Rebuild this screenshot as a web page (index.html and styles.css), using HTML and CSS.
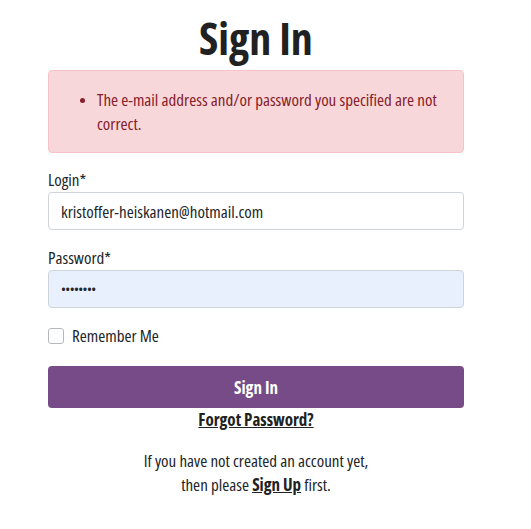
FILE: index.html
```html
<!DOCTYPE html>
<html lang="en">
<head>
<meta charset="utf-8">
<title>Sign In</title>
<link rel="stylesheet" href="styles.css">
</head>
<body>
<main class="page">
  <h1 class="title">Sign In</h1>
  <div class="alert">
    <ul class="alert-list">
      <li>The e-mail address and/or password you specified are not correct.</li>
    </ul>
  </div>
  <form class="form">
    <label class="label" for="login">Login*</label>
    <input class="input" id="login" type="text" value="kristoffer-heiskanen@hotmail.com">
    <label class="label" for="password">Password*</label>
    <input class="input input-filled" id="password" type="password" value="password">
    <label class="check">
      <span class="box"></span>
      <span>Remember Me</span>
    </label>
    <button class="btn" type="button">Sign In</button>
    <a class="forgot" href="#">Forgot Password?</a>
    <p class="signup">If you have not created an account yet,<br>then please <a href="#">Sign Up</a> first.</p>
  </form>
</main>
</body>
</html>
```

FILE: styles.css
```css
* { box-sizing: border-box; }
body {
  margin: 0;
  background: #fff;
  color: #212529;
  font-family: "Open Sans", "DejaVu Sans", sans-serif;
  font-stretch: 75%;
}
.page {
  width: 416px;
  margin-left: 48px;
  padding-top: 14px;
}
.title {
  margin: 0 0 8px;
  text-align: center;
  font-size: 44px;
  line-height: 48px;
  font-weight: 700;
  color: #212121;
}
.alert {
  background: #f8d7da;
  border: 1px solid #f5c2c7;
  border-radius: 4px;
  color: #842029;
  padding: 17px 16px 16px;
  font-size: 17px;
  line-height: 24px;
}
.alert-list {
  margin: 0;
  padding-left: 32px;
}
.alert-list li::marker { font-size: 14px; }
.form {
  display: flex;
  flex-direction: column;
  padding-top: 15px;
}
.label {
  font-size: 17px;
  line-height: 24px;
  color: #212529;
}
.input {
  height: 38px;
  border: 1px solid #ced4da;
  border-radius: 4px;
  padding: 0 12px;
  font-family: inherit;
  font-stretch: 75%;
  font-size: 17px;
  color: #212529;
  background: #fff;
  margin-bottom: 16px;
}
.input-filled {
  background: #e8f0fe;
  font-size: 13px;
  letter-spacing: -0.6px;
}
.check {
  display: flex;
  align-items: center;
  gap: 8px;
  font-size: 17px;
  line-height: 24px;
  margin-top: 0;
}
.box {
  width: 16px;
  height: 16px;
  border: 1px solid #b5b9bd;
  border-radius: 3px;
  background: #fff;
}
.btn {
  margin-top: 18px;
  height: 42px;
  border: none;
  border-radius: 4px;
  background: #764b87;
  color: #fff;
  font-family: inherit;
  font-stretch: 75%;
  font-size: 17px;
  font-weight: 700;
}
.forgot {
  align-self: center;
  margin-top: 0;
  font-size: 17px;
  line-height: 24px;
  font-weight: 700;
  color: #212121;
  text-decoration: underline;
}
.signup {
  margin: 17px 0 0;
  text-align: center;
  font-size: 17px;
  line-height: 24px;
  color: #212529;
}
.signup a {
  color: #212121;
  font-weight: 700;
  text-decoration: underline;
}
```
